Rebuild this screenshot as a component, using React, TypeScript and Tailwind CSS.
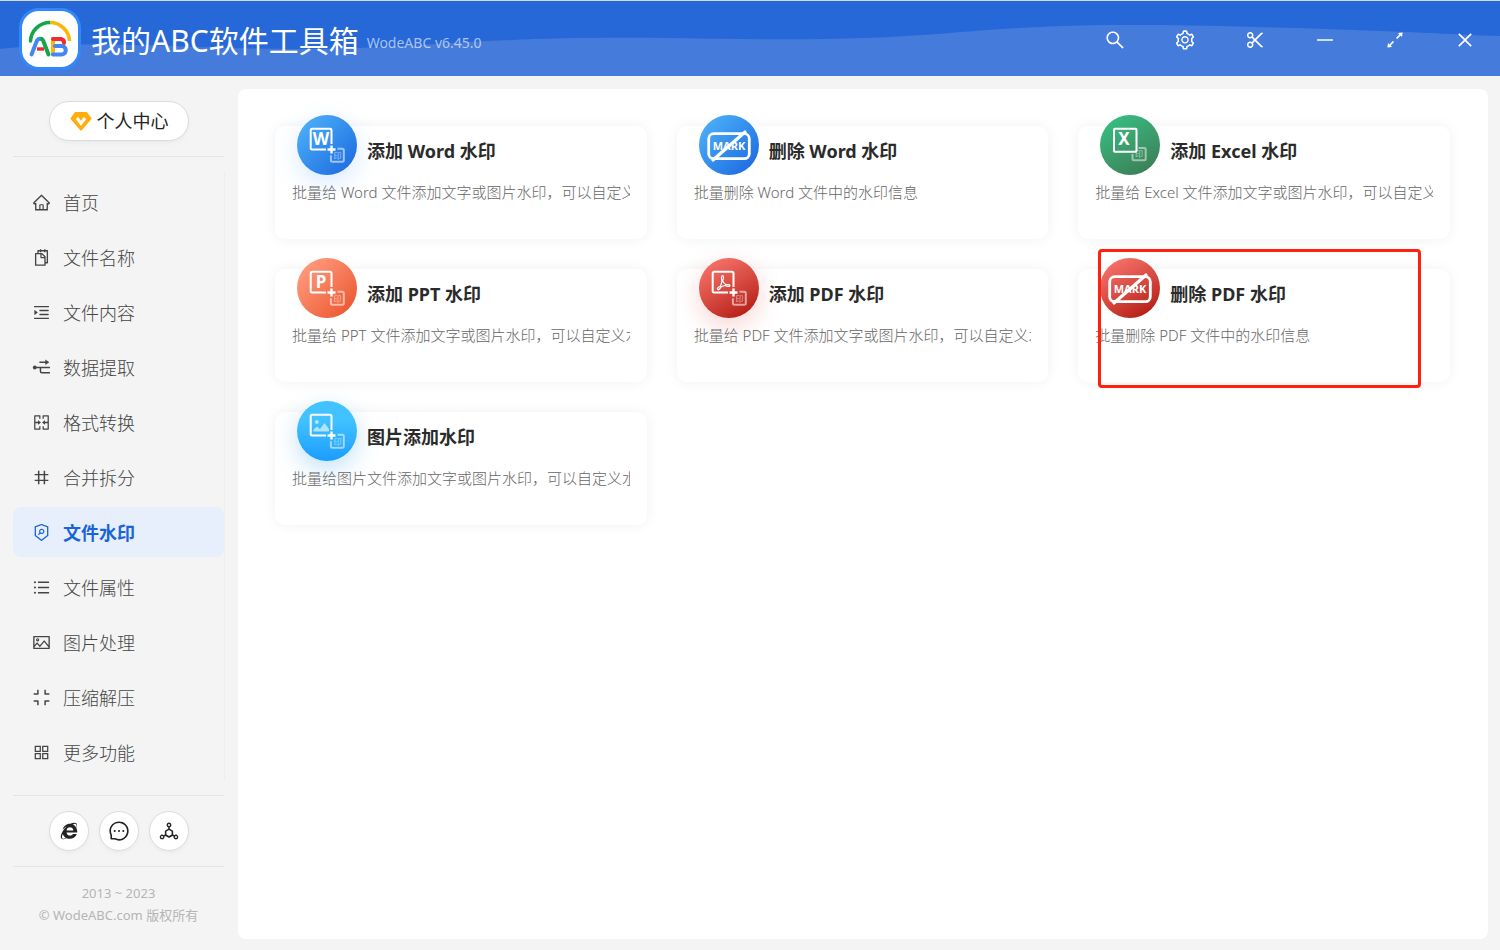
import { ReactNode } from 'react';
import {
  AiOutlineAppstore,
  AiOutlineArrowsAlt,
  AiOutlineClose,
  AiOutlineCompress,
  AiOutlineDeploymentUnit,
  AiOutlineHome,
  AiOutlineIe,
  AiOutlineMenuUnfold,
  AiOutlineMergeCells,
  AiOutlineMessage,
  AiOutlineMinus,
  AiOutlineNumber,
  AiOutlinePicture,
  AiOutlineScissor,
  AiOutlineSearch,
  AiOutlineSecurityScan,
  AiOutlineSetting,
  AiOutlineSnippets,
  AiOutlineUnorderedList,
} from 'react-icons/ai';

const ExtractIcon = () => (
  <svg width="19" height="19" viewBox="0 0 18 18" fill="none" stroke="currentColor" strokeWidth="1.4">
    <circle cx="2.6" cy="9" r="1.8" fill="currentColor" stroke="none" />
    <path d="M2.6 9H17M7 4H14M8 9v3.6q0 1.4 1.4 1.4H17" />
    <path d="M12.6 1.4 16.4 4 12.6 6.6z" fill="currentColor" stroke="none" />
  </svg>
);

const navItems: { label: string; icon: ReactNode; active?: boolean }[] = [
  { label: '首页', icon: <AiOutlineHome size={19} /> },
  { label: '文件名称', icon: <AiOutlineSnippets size={19} /> },
  { label: '文件内容', icon: <AiOutlineMenuUnfold size={19} /> },
  { label: '数据提取', icon: <ExtractIcon /> },
  { label: '格式转换', icon: <AiOutlineMergeCells size={19} /> },
  { label: '合并拆分', icon: <AiOutlineNumber size={19} /> },
  { label: '文件水印', icon: <AiOutlineSecurityScan size={19} />, active: true },
  { label: '文件属性', icon: <AiOutlineUnorderedList size={19} /> },
  { label: '图片处理', icon: <AiOutlinePicture size={19} /> },
  { label: '压缩解压', icon: <AiOutlineCompress size={19} /> },
  { label: '更多功能', icon: <AiOutlineAppstore size={19} /> },
];

const windowButtons = [
  { label: '搜索', icon: <AiOutlineSearch size={22} /> },
  { label: '设置', icon: <AiOutlineSetting size={22} /> },
  { label: '截图', icon: <AiOutlineScissor size={22} /> },
  { label: '最小化', icon: <AiOutlineMinus size={22} /> },
  { label: '最大化', icon: <AiOutlineArrowsAlt size={22} /> },
  { label: '关闭', icon: <AiOutlineClose size={20} /> },
];

const socialLinks = [
  { label: '官方网站', icon: <AiOutlineIe size={22} /> },
  { label: '在线客服', icon: <AiOutlineMessage size={22} /> },
  { label: '软件分享', icon: <AiOutlineDeploymentUnit size={22} /> },
];

const Letter = ({ children }: { children: string }) => (
  <text
    x="24"
    y="30"
    fontSize="17"
    textAnchor="middle"
    className="fill-white font-['Noto_Sans',sans-serif] font-bold"
  >
    {children}
  </text>
);

// Marco con un signo más y el sello pequeño en la esquina
const StampIcon = ({ children, plus = true }: { children: ReactNode; plus?: boolean }) => (
  <svg width="60" height="60" viewBox="0 0 60 60" fill="none" stroke="#fff" strokeWidth="2">
    {plus ? (
      <>
        <path d="M29 34.5H15.2q-1.5 0-1.5-1.5V15.2q0-1.5 1.5-1.5H33q1.5 0 1.5 1.5V29" />
        <path d="M34.5 30.5v8M30.5 34.5h8" strokeWidth="2.4" />
        <path d="M40.5 33.7h4.8q1.5 0 1.5 1.5v10q0 1.5-1.5 1.5H35.4q-1.5 0-1.5-1.5v-5" strokeOpacity=".55" />
      </>
    ) : (
      <>
        <rect x="14" y="13.7" width="22.5" height="23" rx="1" />
        <path d="M38.5 33h5.7q1.500 0 1.500 1.500v9.300q0 1.500-1.500 1.500H34q-1.500 0-1.500-1.500V39" strokeOpacity=".5" />
      </>
    )}
    <text
      x={plus ? 40.4 : 39}
      y={plus ? 43.6 : 42.4}
      fontSize="8"
      textAnchor="middle"
      stroke="none"
      className="fill-white/60 font-['Noto_Sans_CJK_SC',sans-serif]"
    >
      印
    </text>
    <g stroke="none">{children}</g>
  </svg>
);

const MarkIcon = () => (
  <svg width="60" height="60" viewBox="0 0 60 60" fill="none" stroke="#fff">
    <rect x="9.7" y="18.7" width="40.6" height="25" rx="5" strokeWidth="2.8" />
    <text
      x="30"
      y="35"
      fontSize="11"
      textAnchor="middle"
      stroke="none"
      className="fill-white font-['Noto_Sans',sans-serif] font-bold"
    >
      MARK
    </text>
    <path d="M14 45 46 17" strokeWidth="3.2" strokeLinecap="round" />
  </svg>
);

const tools = [
  {
    title: '添加 Word 水印',
    desc: '批量给 Word 文件添加文字或图片水印，可以自定义水印',
    circle: 'bg-linear-135 from-[#52b6fa] to-[#1c64de] shadow-[0_8px_24px_rgba(77,160,255,0.22)]',
    icon: <StampIcon><Letter>W</Letter></StampIcon>,
  },
  {
    title: '删除 Word 水印',
    desc: '批量删除 Word 文件中的水印信息',
    circle: 'bg-linear-135 from-[#52b6fa] to-[#1c64de]',
    icon: <MarkIcon />,
  },
  {
    title: '添加 Excel 水印',
    desc: '批量给 Excel 文件添加文字或图片水印，可以自定义水印',
    circle: 'bg-linear-150 from-[#34c587] to-[#3b7852]',
    icon: <StampIcon plus={false}><Letter>X</Letter></StampIcon>,
  },
  {
    title: '添加 PPT 水印',
    desc: '批量给 PPT 文件添加文字或图片水印，可以自定义水印',
    circle: 'bg-linear-135 from-[#ffa386] to-[#e94c22]',
    icon: <StampIcon><Letter>P</Letter></StampIcon>,
  },
  {
    title: '添加 PDF 水印',
    desc: '批量给 PDF 文件添加文字或图片水印，可以自定义水印',
    circle: 'bg-linear-150 from-[#ff7b74] to-[#ad0300] shadow-[0_8px_24px_rgba(220,60,50,0.22)]',
    icon: (
      <StampIcon>
        <path
          d="M23.4 17.5c1.6 0 .9 3.600.3 5.500.8 1.700 1.800 2.800 3 3.600 1.800-.2 4.200-.1 4.200 1 0 1.300-2.700.9-4.600-.1-1.500.3-3 .8-4.300 1.400-1.100 1.900-2.500 3.300-3.400 2.500-.9-.9 1-2.500 2.700-3.200.8-1.500 1.300-3.200 1.700-4.800-.6-2-.9-5.900.4-5.900z"
          fill="none"
          stroke="#fff"
          strokeWidth="1.2"
        />
      </StampIcon>
    ),
  },
  {
    title: '删除 PDF 水印',
    desc: '批量删除 PDF 文件中的水印信息',
    circle: 'bg-linear-150 from-[#ff7b74] to-[#ad0300]',
    icon: <MarkIcon />,
    highlighted: true,
  },
  {
    title: '图片添加水印',
    desc: '批量给图片文件添加文字或图片水印，可以自定义水印',
    circle: 'bg-linear-to-b from-[#42c3ff] from-30% to-[#1a9cff] shadow-[0_8px_24px_rgba(30,150,230,0.28)]',
    icon: (
      <StampIcon>
        <g fill="#fff" fillOpacity=".6">
          <circle cx="19.8" cy="21" r="2" />
          <path d="M16.5 30.5v-2l3.5-3 3 2.5 4.5-6 4.5 6v2.5z" />
        </g>
      </StampIcon>
    ),
  },
];

const Logo = () => (
  <div className="flex size-[62px] items-center justify-center rounded-[20px] border-[3px] border-[#3287fb] bg-white">
    <svg width="48" height="48" viewBox="0 0 48 48" fill="none" strokeLinecap="round" strokeLinejoin="round">
      <path d="M4.5 26A19.5 19.5 0 0 1 24 7.5" stroke="#16a64a" strokeWidth="3.6" />
      <path d="M24 7.5A19.5 19.5 0 0 1 43.5 26" stroke="#fbb60a" strokeWidth="3.6" strokeLinecap="butt" />
      <path d="M5.500 39.500 11 25.500q1.500-2.500 4.500-1.500" stroke="#4387f5" strokeWidth="4" />
      <path d="M15.500 24q1.500.5 2 2.500L22.500 39.500" stroke="#16a64a" strokeWidth="4" />
      <path d="M11 34h7" stroke="#ee2b33" strokeWidth="3.4" strokeLinecap="butt" />
      <path d="M27 24V39" stroke="#fbb60a" strokeWidth="4" />
      <path d="M27 24h8q3.500 1 3 4" stroke="#ee2b33" strokeWidth="4" />
      <path d="M29 31h6.500a4 4 0 0 1 0 8.500H27" stroke="#4387f5" strokeWidth="4" />
    </svg>
  </div>
);

const Header = () => (
  <header className="relative flex h-[76px] items-center justify-between border-t border-[#d4dbe4] bg-[#2768d8] text-white">
    <svg
      className="absolute inset-0 size-full"
      viewBox="0 0 1500 75"
      preserveAspectRatio="none"
      aria-hidden="true"
    >
      <path
        d="M0 48C60 42 120 43 200 46S340 49 420 44 560 36 660 37 840 41 950 32 1100 24 1150 24 1300 27 1380 30 1460 34 1500 35V75H0z"
        fill="#457bdb"
      />
    </svg>
    <div className="relative flex items-center gap-2.5 pl-[19px]">
      <Logo />
      <div className="flex items-center gap-2 pt-1">
        <h1 className="text-[30px] leading-10">我的ABC软件工具箱</h1>
        <span className="pt-1 text-sm text-white/60">WodeABC v6.45.0</span>
      </div>
    </div>
    <div className="relative flex pt-0.5">
      {windowButtons.map((button) => (
        <button
          key={button.label}
          type="button"
          aria-label={button.label}
          className="flex h-10 w-[70px] items-center justify-center"
        >
          {button.icon}
        </button>
      ))}
    </div>
  </header>
);

const Sidebar = () => (
  <aside className="w-[238px] shrink-0 pt-[25px] pr-3.5 pl-[13px]">
    <button
      type="button"
      className="mx-auto flex h-10 w-[140px] items-center justify-center gap-1 rounded-full border border-[#dcdcdc] bg-white text-lg text-[#222] shadow-[0_2px_4px_rgba(0,0,0,0.04)]"
    >
      <svg width="24" height="20" viewBox="0 0 24 20" aria-hidden="true">
        <path
          d="M6.500 2h11L21.500 7.500 12 18.500 2.500 7.500z"
          fill="#ffad0d"
          stroke="#ffad0d"
          strokeWidth="2"
          strokeLinejoin="round"
        />
        <path d="M8 7 12 12.500 16 7" fill="none" stroke="#fff" strokeWidth="3" />
      </svg>
      <span>个人中心</span>
    </button>

    <nav className="mt-[15px] border-t border-[#e4e4e4] pt-[15px]">
      <ul className="-mr-px flex flex-col gap-[5px] border-r border-[#eeeeee] pt-[5px] pb-[3px]">
        {navItems.map((item) => (
          <li key={item.label}>
            <a
              href="#"
              className={`flex h-[50px] items-center gap-3 rounded-lg pt-px pl-[19px] text-lg ${
                item.active ? 'bg-[#e7effd] font-bold text-[#1b64d8]' : 'font-light text-[#444]'
              }`}
            >
              {item.icon}
              {item.label}
            </a>
          </li>
        ))}
      </ul>
    </nav>

    <div className="mt-[15px] flex justify-center gap-2.5 border-y border-[#e4e4e4] py-[15px]">
      {socialLinks.map((link) => (
        <a
          key={link.label}
          href="#"
          aria-label={link.label}
          className="flex size-10 items-center justify-center rounded-full border border-[#dcdcdc] bg-white text-[#222] shadow-[0_2px_4px_rgba(0,0,0,0.04)]"
        >
          {link.icon}
        </a>
      ))}
    </div>

    <footer className="pt-[15px] text-center text-[13px] leading-[22px] text-[#b5b5b5]">
      <p>2013 ~ 2023</p>
      <p>© WodeABC.com 版权所有</p>
    </footer>
  </aside>
);

const App = () => {
  return (
    <div className="flex min-h-screen flex-col bg-[#f4f4f4] font-['Noto_Sans','Noto_Sans_CJK_SC',sans-serif]">
      <Header />
      <div className="flex flex-1">
        <Sidebar />
        <main className="mt-[13px] mr-3 mb-[11px] min-w-0 flex-1 rounded-lg bg-white py-[37px] pr-[38px] pl-[37px]">
          <div className="grid grid-cols-3 gap-[30px]">
            {tools.map((tool) => (
              <a
                key={tool.title}
                href="#"
                className="relative block min-w-0 rounded-[10px] bg-white px-[17px] pb-[35px] shadow-[0_0_14px_rgba(0,0,0,0.06)]"
              >
                <div className="flex items-center gap-2.5 pl-[5px]">
                  <div className={`-mt-[11px] size-[60px] shrink-0 rounded-full ${tool.circle}`}>{tool.icon}</div>
                  <h2 className="text-lg font-bold text-[#2b2b2b]">{tool.title}</h2>
                </div>
                <p className="mt-[5px] overflow-hidden text-[15px] leading-6 font-light whitespace-nowrap text-[#666]">
                  {tool.desc}
                </p>
                {tool.highlighted && (
                  <div className="absolute -top-5 right-[29px] -bottom-1.5 left-5 rounded-sm border-[3px] border-[#ff2010]" />
                )}
              </a>
            ))}
          </div>
        </main>
      </div>
    </div>
  );
};

export default App;
